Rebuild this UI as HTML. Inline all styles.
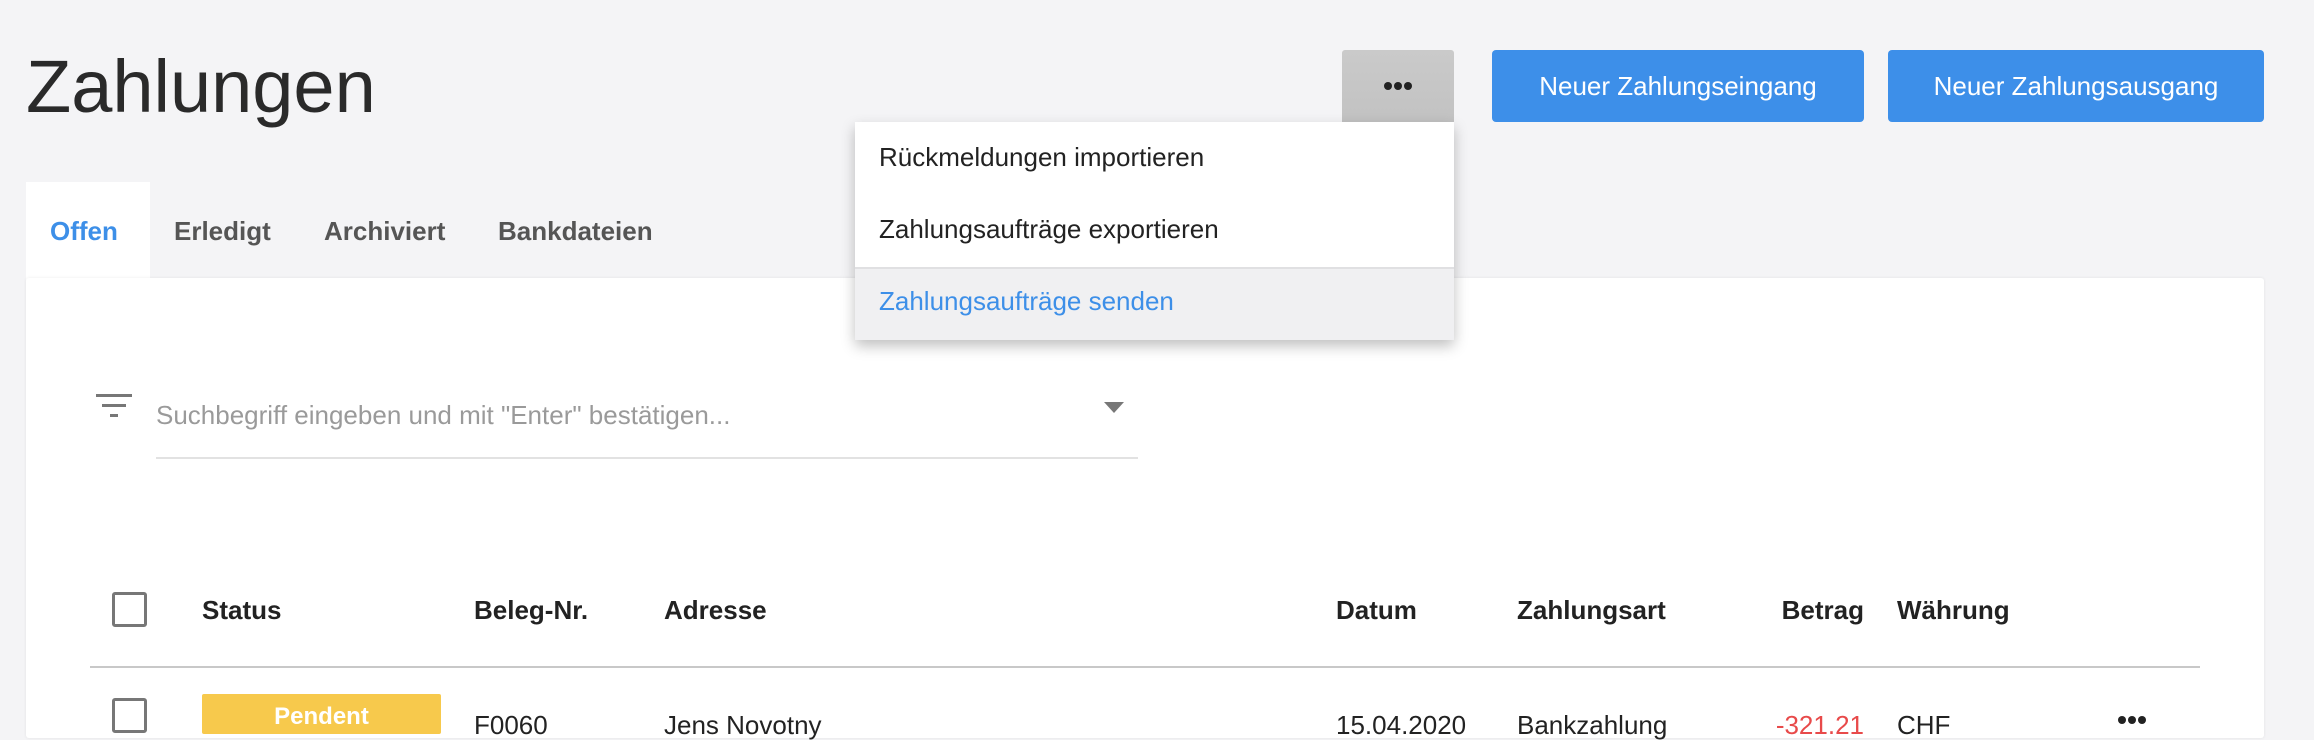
<!DOCTYPE html>
<html><head><meta charset="utf-8"><style>
*{margin:0;padding:0;box-sizing:border-box}
body{width:2314px;height:724px;background:#f4f4f6;font-family:"Liberation Sans",sans-serif;position:relative;overflow:hidden;color:#222}
.a{position:absolute;white-space:nowrap}
.title{left:26px;top:44px;font-size:74px;color:#2a2a2a;line-height:86px}
.tab{top:216px;font-size:26px;line-height:30px;color:#555;font-weight:bold}
.btn{top:50px;height:72px;background:#3d8fe9;border-radius:4px;color:#fff;font-size:26px;line-height:72px;text-align:center}
.dd{left:855px;top:122px;width:599px;height:218px;background:#fff;box-shadow:0 6px 14px rgba(0,0,0,.25);border-radius:0 0 3px 3px}
.mi{left:24px;font-size:26px;color:#222}
.h{top:595px;font-size:26px;font-weight:bold;line-height:30px;color:#222}
.r{top:710px;font-size:26px;line-height:30px;color:#222}
.cb{width:35px;height:35px;border:3px solid #777;border-radius:3px}
.dot{position:absolute;width:8px;height:8px;border-radius:50%;background:#222}
</style></head><body>
<div class="a title">Zahlungen</div>
<div class="a" style="left:26px;top:182px;width:124px;height:100px;background:#fff"></div>
<div class="a tab" style="left:50px;color:#3d8fe8">Offen</div>
<div class="a tab" style="left:174px">Erledigt</div>
<div class="a tab" style="left:324px">Archiviert</div>
<div class="a tab" style="left:498px">Bankdateien</div>
<div class="a" style="left:26px;top:278px;width:2238px;height:460px;background:#fff;border-radius:3px;box-shadow:0 0 3px rgba(0,0,0,.08)"></div>
<div class="a" style="left:1342px;top:50px;width:112px;height:72px;background:linear-gradient(#cacaca,#c2c2c2);border-radius:3px 3px 0 0"></div>
<div class="dot" style="left:1384px;top:82px"></div>
<div class="dot" style="left:1394px;top:82px"></div>
<div class="dot" style="left:1404px;top:82px"></div>
<div class="a btn" style="left:1492px;width:372px">Neuer Zahlungseingang</div>
<div class="a btn" style="left:1888px;width:376px">Neuer Zahlungsausgang</div>
<div class="a dd">
 <div class="a mi" style="top:20px">Rückmeldungen importieren</div>
 <div class="a mi" style="top:92px">Zahlungsaufträge exportieren</div>
 <div class="a" style="left:0;top:145px;width:599px;height:73px;background:#f0f0f2;border-top:2px solid #e0e0e2"></div>
 <div class="a mi" style="top:164px;color:#3d8fe8">Zahlungsaufträge senden</div>
</div>
<div class="a" style="left:96px;top:394px;width:36px;height:3px;background:#777"></div>
<div class="a" style="left:102px;top:404px;width:24px;height:3px;background:#777"></div>
<div class="a" style="left:110px;top:414px;width:8px;height:3px;background:#777"></div>
<div class="a" style="left:156px;top:400px;font-size:26px;color:#9a9a9a">Suchbegriff eingeben und mit "Enter" bestätigen...</div>
<div class="a" style="left:1104px;top:402px;width:0;height:0;border-left:10px solid transparent;border-right:10px solid transparent;border-top:11px solid #777"></div>
<div class="a" style="left:156px;top:457px;width:982px;height:2px;background:#e2e2e2"></div>
<div class="a cb" style="left:112px;top:592px"></div>
<div class="a h" style="left:202px">Status</div>
<div class="a h" style="left:474px">Beleg-Nr.</div>
<div class="a h" style="left:664px">Adresse</div>
<div class="a h" style="left:1336px">Datum</div>
<div class="a h" style="left:1517px">Zahlungsart</div>
<div class="a h" style="left:1700px;width:164px;text-align:right">Betrag</div>
<div class="a h" style="left:1897px">Währung</div>
<div class="a" style="left:90px;top:666px;width:2110px;height:2px;background:#c8c8c8"></div>
<div class="a cb" style="left:112px;top:698px"></div>
<div class="a" style="left:202px;top:694px;width:239px;height:40px;background:#f7c94c;border-radius:2px;color:#fff;font-weight:bold;font-size:24px;text-align:center;line-height:46px">Pendent</div>
<div class="a r" style="left:474px">F0060</div>
<div class="a r" style="left:664px">Jens Novotny</div>
<div class="a r" style="left:1336px">15.04.2020</div>
<div class="a r" style="left:1517px">Bankzahlung</div>
<div class="a r" style="left:1700px;width:164px;text-align:right;color:#e84a4a">-321.21</div>
<div class="a r" style="left:1897px">CHF</div>
<div class="dot" style="left:2118px;top:716px"></div>
<div class="dot" style="left:2128px;top:716px"></div>
<div class="dot" style="left:2138px;top:716px"></div>
</body></html>
